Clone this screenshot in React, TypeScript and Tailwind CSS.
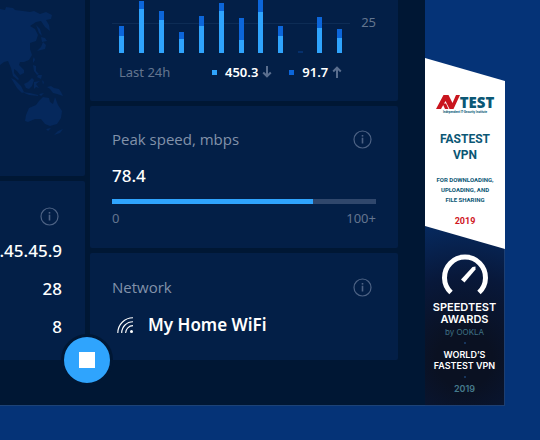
import React from "react";

type Sample = { x: number; down: number; up: number };

const samples: Sample[] = [
  { x: 7, down: 17, up: 10 },
  { x: 27, down: 44, up: 8 },
  { x: 47, down: 33, up: 9 },
  { x: 67, down: 14, up: 7 },
  { x: 87, down: 27, up: 10 },
  { x: 107, down: 42, up: 8 },
  { x: 127, down: 13, up: 22 },
  { x: 146, down: 41, up: 12 },
  { x: 166, down: 17, up: 10 },
  { x: 205, down: 25, up: 11 },
  { x: 225, down: 15, up: 9 },
];

function InfoButton({ label }: { label: string }) {
  return (
    <button type="button" aria-label={label} className="block size-[19px] shrink-0 text-[#4d6284]">
      <svg viewBox="0 0 19 19" className="size-full" fill="none" stroke="currentColor">
        <circle cx="9.5" cy="9.5" r="8.5" strokeWidth="1.2" />
        <path d="M9.5 7.700v5.800" strokeWidth="1.600" />
        <path d="M9.5 5v1.600" strokeWidth="1.600" />
      </svg>
    </button>
  );
}

function WorldMap() {
  return (
    <svg viewBox="0 0 85 176" className="block h-[176px] w-[85px]" fill="#05285c" aria-hidden="true">
      <path d="M0 9L5 10L6 7L13 8L15 10L23 11L30 12L34 11L40 14L46 12L52 15L51 19L46 20L49 25L50 31L45 27L41 21L36 22L30 26L35 29L38 35L36 41L30 43L30 49L32 55L29 60L24 62L20 62L19 65L24 70L24 73L20 75L17 71L14 69L14 73L19 79L18 80L13 76L11 68L8 61L4 62L0 65Z" />
      <path d="M36 25L40 29L42 36L39 33ZM41 37L45 38L47 41L42 42ZM43 42L46 45L45 49L41 50L37 51L41 47ZM33 59L34 57L35 60L33 63ZM33 65L36 66L36 71L39 74L37 75L34 71ZM38 75L42 75L41 79L37 77Z" />
      <path d="M11 78L15 80L21 86L24 92L22 93L17 88ZM22 92L30 93L38 95V96L29 95ZM24 84L28 82L32 78L34 80L32 86L29 89L26 88ZM34 82L40 81L36 84L39 88L36 87L34 89ZM42 80L44 82L43 85ZM47 87L51 86L54 88L59 89L61 92L63 96L57 94L53 93L50 89ZM39 94L44 93L41 96Z" />
      <path d="M25 121L26 115L29 108L36 105L39 101L43 97L49 98L50 102L53 104L55 97L58 105L62 111L61 118L57 124L50 126L45 124L41 119L35 119L28 122ZM46 129L51 128L48 131ZM63 129L60 133L54 135L58 131Z" />
    </svg>
  );
}

function SpeedChart() {
  return (
    <svg viewBox="0 0 238 53" className="block h-[53px] w-[238px]" role="img" aria-label="Speed history">
      <rect x="0" y="23" width="238" height="1" fill="#0d2c55" />
      {samples.map((s) => (
        <g key={s.x}>
          <rect x={s.x} y={53 - s.down - s.up} width="5" height={s.up} fill="#0c66da" />
          <rect x={s.x} y={53 - s.down} width="5" height={s.down} fill="#2fa4fd" />
        </g>
      ))}
      <rect x="186" y="51" width="5" height="2" fill="#06306c" />
    </svg>
  );
}

function Arrow({ up = false }: { up?: boolean }) {
  return (
    <svg viewBox="0 0 10 12" className="h-3 w-[10px]" fill="none" stroke="#5a6e8e" strokeWidth="2" aria-hidden="true">
      <path d={up ? "M5 12V1.500M1.200 5.500L5 1.700L8.800 5.500" : "M5 0V10.500M1.200 6.500L5 10.300L8.800 6.500"} />
    </svg>
  );
}

function WifiIcon() {
  return (
    <svg viewBox="0 0 17 17" className="size-[17px]" fill="none" stroke="white" strokeWidth="1.1" aria-hidden="true">
      <path d="M.8 16A15.200 15.200 0 0 1 16 .8M4.700 16A11.300 11.300 0 0 1 16 4.700M8.600 16A7.400 7.400 0 0 1 16 8.600" />
      <circle cx="14.500" cy="14.500" r="1.500" fill="white" stroke="none" />
    </svg>
  );
}

function AwardBanner() {
  return (
    <aside className="flex w-20 shrink-0 flex-col pt-[58px] text-center">
      <div className="relative z-10 flex h-[191px] flex-col items-center bg-white pt-9 font-['Roboto',sans-serif] font-bold text-[#0b5775] [clip-path:polygon(0_0,100%_23px,100%_100%,0_calc(100%_-_23px))]">
        <div className="flex h-4 items-center">
          <svg viewBox="0 0 24 14" className="h-[14px] w-6" aria-hidden="true">
            <path fill="#c9151e" d="M0 14L7.500 0H12.500L16.500 8L20 0H24L17.500 14H13.500L9.500 6L5 14Z" />
            <path fill="#c9151e" d="M6.500 8.500H10L12.500 14H9Z" />
          </svg>
          <span className="font-['Open_Sans',sans-serif] text-[15px] leading-4 font-extrabold">TEST</span>
        </div>
        <p className="text-[3px] leading-[5px] whitespace-nowrap">Independent IT-Security Institute</p>
        <h2 className="mt-4 text-[12px] leading-4">FASTEST<br />VPN</h2>
        <p className="mt-3 text-[6px] leading-[10px] whitespace-nowrap">FOR DOWNLOADING,<br />UPLOADING, AND<br />FILE SHARING</p>
        <p className="mt-2 text-[9px] leading-4 text-[#d0161f]">2019</p>
      </div>
      <div className="-mt-6 flex h-[181px] flex-col items-center border-r border-b border-[#1d3f72] bg-[radial-gradient(circle_at_50%_75%,#0a1122_20%,#08183a_60%,#062a60_100%)] pt-7 font-['Inter',sans-serif] whitespace-nowrap text-white">
        <svg viewBox="0 0 48 44" className="h-11 w-12 shrink-0" aria-hidden="true">
          <path d="M10 39.500A20.500 20.500 0 1 1 38 39.500" fill="none" stroke="white" strokeWidth="5" />
          <path d="M20 26.500L31.500 14L34.500 13.500V16.500L23.500 29.500Z" fill="white" />
        </svg>
        <p className="mt-1 text-[11px] leading-3 font-semibold">SPEEDTEST<br />AWARDS</p>
        <p className="mt-[2px] text-[8px] leading-[10px] text-[#3f7185]">by OOKLA</p>
        <span className="my-[5px] size-[2px] shrink-0 rounded-full bg-[#1c4272]" />
        <p className="text-[9px] leading-[11px] font-semibold">WORLD’S<br />FASTEST VPN</p>
        <span className="my-[5px] size-[2px] shrink-0 rounded-full bg-[#1c4272]" />
        <p className="text-[9px] leading-3 font-semibold text-[#457a8c]">2019</p>
      </div>
    </aside>
  );
}

export default function App() {
  return (
    <div className="flex min-h-screen items-start bg-[#053377] pr-[35px] font-['Noto_Sans',sans-serif] text-white">
      <main className="relative flex min-w-0 flex-1 items-stretch gap-[5px] border-b border-[#1d4377] bg-[#001734] pr-[27px] pb-[45px]">
        <div className="flex w-[85px] shrink-0 flex-col gap-[5px]">
          <section className="rounded-br-xs bg-[#031f47]">
            <WorldMap />
          </section>
          <section className="flex flex-1 flex-col items-end rounded-tr-xs bg-[#031f47] pt-[26px] pr-[23px]">
            <div className="pr-[3px]">
              <InfoButton label="About connection details" />
            </div>
            <div className="mt-[6px] text-right text-[17px] leading-[38px] font-medium">
              <p>.45.45.9</p>
              <p>28</p>
              <p>8</p>
            </div>
          </section>
        </div>

        <div className="flex min-w-0 flex-1 flex-col gap-[5px]">
          <section className="rounded-b-xs bg-[#031f47] px-[22px] pb-[19px]">
            <div className="flex justify-between">
              <SpeedChart />
              <span className="pt-3 text-[13px] leading-5 text-[#63758f]">25</span>
            </div>
            <div className="mt-[9px] flex h-5 items-center pl-[7px] text-[13px] leading-5">
              <span className="w-[93px] text-[#63758f]">Last 24h</span>
              <span className="mr-2 size-[5px] bg-[#2fa4fd]" />
              <span className="mr-1 font-semibold">450.3</span>
              <Arrow />
              <span className="mr-2 ml-[17px] size-[5px] bg-[#0c66da]" />
              <span className="mr-1 font-semibold">91.7</span>
              <Arrow up />
            </div>
          </section>

          <section className="rounded-xs bg-[#031f47] px-[22px] pt-[21px] pb-[20px]">
            <div className="flex items-center justify-between pr-1">
              <h2 className="font-['Open_Sans',sans-serif] text-[15px] leading-6 text-[#8292aa]">Peak speed, mbps</h2>
              <InfoButton label="About peak speed" />
            </div>
            <p className="mt-[13px] text-[17px] leading-6 font-medium">78.4</p>
            <div className="mt-[11px] h-[5px] bg-[#30476c]" role="progressbar" aria-label="Peak speed" aria-valuenow={78.4} aria-valuemin={0} aria-valuemax={100}>
              <div className="h-full w-[76%] bg-[#2fa4fd]" />
            </div>
            <div className="mt-1 flex justify-between text-[13px] leading-5 text-[#63758f]">
              <span>0</span>
              <span>100+</span>
            </div>
          </section>

          <section className="rounded-xs bg-[#031f47] px-[22px] pt-[22px] pb-[23px]">
            <div className="flex items-center justify-between pr-1">
              <h2 className="font-['Open_Sans',sans-serif] text-[15px] leading-6 text-[#8292aa]">Network</h2>
              <InfoButton label="About network" />
            </div>
            <div className="mt-[14px] flex items-center gap-[14px] pl-[5px]">
              <WifiIcon />
              <p className="text-[17px] leading-6 font-semibold">My Home WiFi</p>
            </div>
          </section>
        </div>

        <button type="button" aria-label="Disconnect" className="absolute bottom-[19px] left-[61px] grid size-[52px] place-items-center rounded-full border-3 border-[#001734] bg-[#2fa4fd]">
          <span className="size-4 bg-white" />
        </button>
      </main>
      <AwardBanner />
    </div>
  );
}
